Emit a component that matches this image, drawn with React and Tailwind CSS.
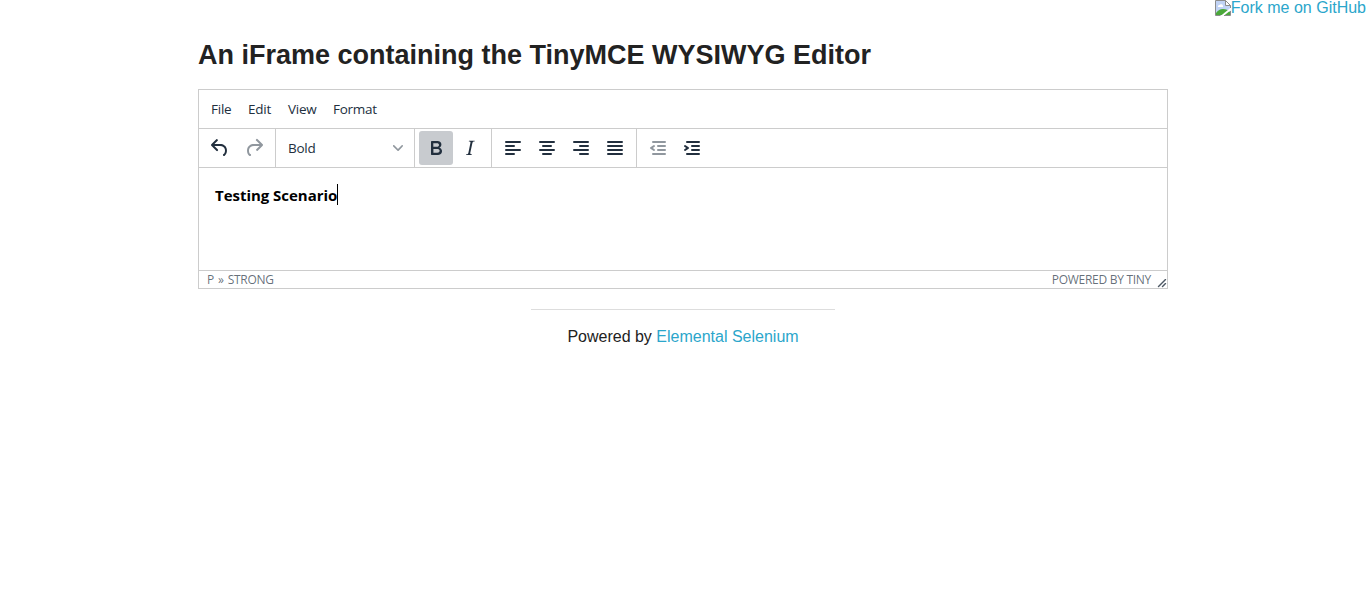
const PATHS = {
  undo: "M6.4 8H12c3.7 0 6.2 2 6.8 5.1.6 2.7-.4 5.6-2.3 6.8a1 1 0 01-1-1.8c1.1-.6 1.8-2.7 1.4-4.6-.5-2.1-2.1-3.5-4.9-3.5H6.4l3.3 3.3a1 1 0 11-1.4 1.4l-5-5a1 1 0 010-1.4l5-5a1 1 0 011.4 1.4L6.4 8z",
  redo: "M17.6 10H12c-2.8 0-4.4 1.4-4.9 3.5-.4 2 .3 4 1.4 4.6a1 1 0 11-1 1.8c-2-1.2-2.9-4.1-2.3-6.8.6-3 3-5.1 6.8-5.1h5.6l-3.3-3.3a1 1 0 111.4-1.4l5 5a1 1 0 010 1.4l-5 5a1 1 0 01-1.4-1.4l3.3-3.3z",
  bold: "M7.8 19c-.3 0-.5 0-.6-.2l-.2-.5V5.7c0-.2 0-.4.2-.5l.6-.2h5c1.5 0 2.7.3 3.5 1 .7.6 1.1 1.4 1.1 2.5a3 3 0 01-.6 1.9c-.4.6-1 1-1.6 1.2.4.1.9.3 1.3.6s.8.7 1 1.2c.4.4.5 1 .5 1.6 0 1.3-.4 2.3-1.3 3-.8.7-2.1 1-3.8 1H7.8zm5-8.3c.6 0 1.2-.1 1.6-.5.4-.3.6-.7.6-1.3 0-1.1-.8-1.7-2.3-1.7H9.3v3.5h3.4zm.5 6c.7 0 1.3-.1 1.7-.4.4-.4.6-.9.6-1.5s-.2-1-.7-1.4c-.4-.3-1-.4-2-.4H9.4v3.8h4z",
  italic: "M16.7 4.7l-.1.9h-.3c-.6 0-1 0-1.4.3-.3.3-.4.6-.5 1.1l-2.1 9.8v.6c0 .5.4.8 1.4.8h.2l-.2.8H8l.2-.8h.2c1.1 0 1.8-.5 2-1.5l2-9.8.1-.5c0-.6-.4-.8-1.4-.8h-.3l.2-.9h5.8z",
  left: "M5 5h14a1 1 0 010 2H5a1 1 0 110-2zm0 4h8a1 1 0 010 2H5a1 1 0 110-2zm0 8h8a1 1 0 010 2H5a1 1 0 010-2zm0-4h14a1 1 0 010 2H5a1 1 0 010-2z",
  center: "M5 5h14a1 1 0 010 2H5a1 1 0 110-2zm3 4h8a1 1 0 010 2H8a1 1 0 110-2zm0 8h8a1 1 0 010 2H8a1 1 0 010-2zm-3-4h14a1 1 0 010 2H5a1 1 0 010-2z",
  right: "M5 5h14a1 1 0 010 2H5a1 1 0 110-2zm6 4h8a1 1 0 010 2h-8a1 1 0 010-2zm0 8h8a1 1 0 010 2h-8a1 1 0 010-2zm-6-4h14a1 1 0 010 2H5a1 1 0 010-2z",
  justify: "M5 5h14a1 1 0 010 2H5a1 1 0 110-2zm0 4h14a1 1 0 010 2H5a1 1 0 110-2zm0 4h14a1 1 0 010 2H5a1 1 0 010-2zm0 4h14a1 1 0 010 2H5a1 1 0 010-2z",
  outdent: "M7 5h12a1 1 0 010 2H7a1 1 0 110-2zm5 4h7a1 1 0 010 2h-7a1 1 0 010-2zm0 4h7a1 1 0 010 2h-7a1 1 0 010-2zm-5 4h12a1 1 0 010 2H7a1 1 0 010-2zm1.6-3.8a1 1 0 01-1.2 1.6l-3-2a1 1 0 010-1.6l3-2a1 1 0 011.2 1.6L6.8 12l1.8 1.2z",
  indent: "M7 5h12a1 1 0 010 2H7a1 1 0 110-2zm5 4h7a1 1 0 010 2h-7a1 1 0 010-2zm0 4h7a1 1 0 010 2h-7a1 1 0 010-2zm-5 4h12a1 1 0 010 2H7a1 1 0 010-2zm-2.6-3.8L6.2 12l-1.8-1.2a1 1 0 011.2-1.6l3 2a1 1 0 010 1.6l-3 2a1 1 0 11-1.2-1.6z",
};

function ToolButton({ icon, active, disabled }) {
  return (
    <button
      aria-label={icon}
      disabled={disabled}
      className={`flex h-[34px] w-[34px] items-center justify-center rounded-[3px] ${active ? "bg-[#c8cbcf]" : ""} ${disabled ? "text-[#222f3e]/50" : "text-[#222f3e]"}`}
    >
      <svg width="24" height="24" fill="currentColor" fillRule="evenodd">
        <path d={PATHS[icon]} />
      </svg>
    </button>
  );
}

function Group({ children, last }) {
  return (
    <div className={`flex items-center px-1 ${last ? "" : "border-r border-[#cccccc]"}`}>{children}</div>
  );
}

export default function App() {
  return (
    <div className="relative h-[612px] overflow-hidden bg-white pt-[38px] font-['Liberation_Sans',sans-serif] text-[#222222]">
      <a className="absolute top-0 right-0 flex h-4 text-base leading-4 text-[#2ba6cb]">
        <svg width="16" height="16" viewBox="0 0 16 16">
          <path d="M.5.5h10l5 5v10H.5z" fill="#c1d3f5" />
          <path d="M3 7a1.500 1.500 0 011.500-2 2 2 0 013.500 1 1 1 0 010 1z" fill="#fff" />
          <path d="M1 15v-2c2-2.500 4-4 7-4 3 0 5 1 7 3v3z" fill="#4ba83a" />
          <path d="M5.500 16L16 7.500V10l-7.500 6z" fill="#fff" />
          <path d="M5.500 15.500H.5V.5h10l5 5v2.500M15.500 11v4.500H9" fill="none" stroke="#8c8c8c" />
          <path d="M10.500.5v5h5z" fill="#fff" stroke="#8c8c8c" />
        </svg>
        Fork me on GitHub
      </a>
      <main className="mx-auto w-[970px]">
        <h3 className="h-[34px] text-[27px] leading-[34px] font-bold whitespace-nowrap">
          An iFrame containing the TinyMCE WYSIWYG Editor
        </h3>
        <div className="mt-[17px] flex h-[200px] flex-col border border-[#cccccc] font-['Open_Sans',sans-serif]">
          <div className="flex h-[38px] items-center pt-px pl-3 text-[13.5px] tracking-[-0.25px] text-[#222f3e]">
            <span className="w-[37px]">File</span>
            <span className="w-[40px]">Edit</span>
            <span className="w-[45px]">View</span>
            <span>Format</span>
          </div>
          <div className="flex h-10 border-y border-[#cccccc]">
            <Group>
              <ToolButton icon="undo" />
              <ToolButton icon="redo" disabled />
            </Group>
            <Group>
              <div className="flex h-[34px] w-[130px] items-center justify-between pr-[7px] pl-2 text-[13.5px] tracking-[-0.25px] text-[#222f3e]">
                <span>Bold</span>
                <svg width="10" height="10" fill="#222f3e" fillOpacity="0.5">
                  <path d="M8.700 2.200c.3-.3.8-.3 1 0 .4.4.4.9 0 1.200L5.700 7.800c-.3.3-.9.3-1.200 0L.2 3.400a.8.8 0 010-1.200c.3-.3.8-.3 1.100 0L5 6l3.700-3.800z" />
                </svg>
              </div>
            </Group>
            <Group>
              <ToolButton icon="bold" active />
              <ToolButton icon="italic" />
            </Group>
            <Group>
              <ToolButton icon="left" />
              <ToolButton icon="center" />
              <ToolButton icon="right" />
              <ToolButton icon="justify" />
            </Group>
            <Group last>
              <ToolButton icon="outdent" disabled />
              <ToolButton icon="indent" />
            </Group>
          </div>
          <div className="flex flex-1 items-start px-4 pt-4 text-[15px] leading-[22px] font-bold text-black">
            <span className="tracking-[-0.03px]">Testing Scenario</span>
            <span className="h-[21px] w-px bg-black" />
          </div>
          <div className="flex h-[18px] shrink-0 items-center border-t border-[#cccccc] pl-2 text-[12px] leading-[17px] tracking-[-0.28px] text-[#222f3e]/70">
            <span className="flex-1 [word-spacing:1.2px]">P » STRONG</span>
            <span>POWERED BY TINY</span>
            <svg className="mt-[6px] ml-[6px]" width="10" height="10" fill="#222f3e" fillOpacity="0.8">
              <path d="M8.100 1.100A.5.5 0 119 2l-7 7A.5.5 0 111 8l7-7zM8.100 5.100A.5.5 0 119 6l-3 3A.5.5 0 115 8l3-3z" />
            </svg>
          </div>
        </div>
        <footer className="mx-auto mt-5 w-[304px] border-t border-[#dddddd] pt-[14px] text-center text-base leading-[26px]">
          Powered by <a className="text-[#2ba6cb]">Elemental Selenium</a>
        </footer>
      </main>
    </div>
  );
}
